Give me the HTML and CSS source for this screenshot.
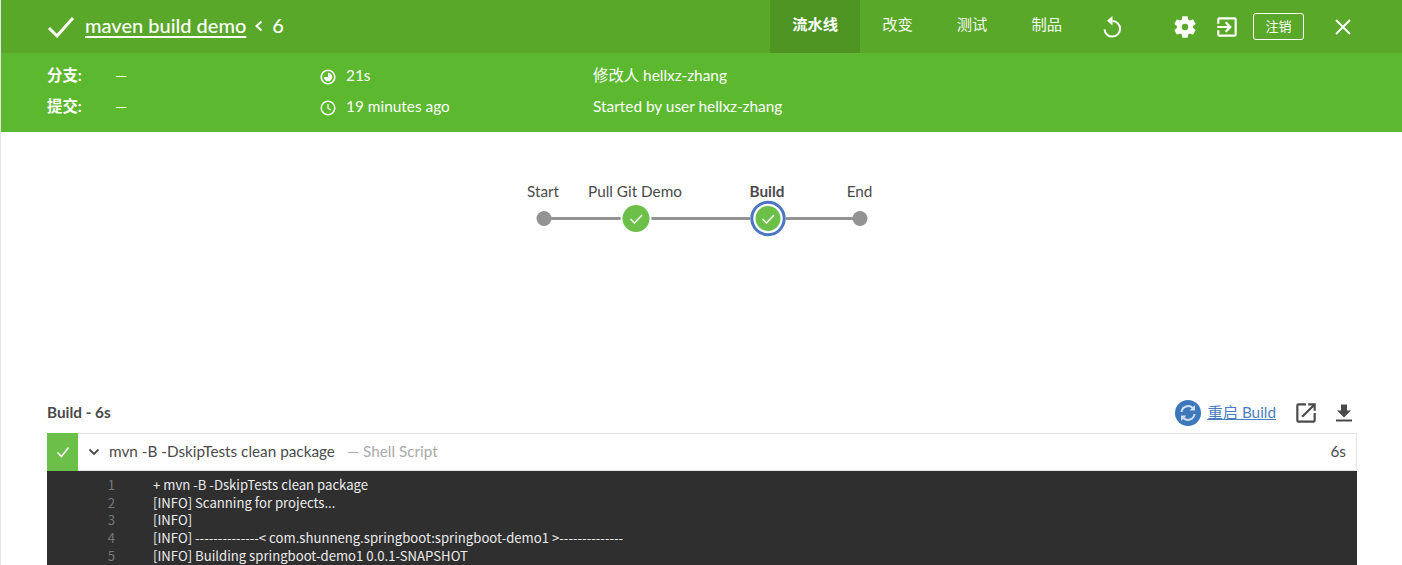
FILE: index.html
```html
<!DOCTYPE html>
<html lang="zh">
<head>
<meta charset="utf-8">
<title>maven build demo</title>
<link rel="stylesheet" href="styles.css">
</head>
<body>
<div class="page">
  <header class="topbar">
    <div class="title">
      <svg class="title-check" width="28" height="22" viewBox="0 0 28 22"><path d="M2 12l8 8L26 2" fill="none" stroke="#fff" stroke-width="3"/></svg>
      <a class="title-link" href="#">maven build demo</a>
      <svg class="title-chev" width="9" height="12" viewBox="0 0 9 12"><path d="M7.500 1.500L2.500 6l5 4.500" fill="none" stroke="#fff" stroke-width="2"/></svg>
      <span class="title-num">6</span>
    </div>
    <nav class="tabs">
      <a class="tab active">流水线</a>
      <a class="tab">改变</a>
      <a class="tab">测试</a>
      <a class="tab">制品</a>
    </nav>
    <svg class="icon-replay" width="24" height="24" viewBox="0 0 24 24"><path d="M12.500 6a7.800 7.800 0 1 1-8 8.400" fill="none" stroke="#fff" stroke-width="2"/><path d="M12.500 1v9.500L7 5.700z" fill="#fff"/></svg>
    <svg class="icon-gear" width="26" height="26" viewBox="0 0 24 24"><path fill="#fff" fill-rule="evenodd" d="M19.430 12.980c.04-.32.070-.64.070-.98s-.03-.66-.07-.98l2.110-1.650c.19-.15.240-.42.120-.64l-2-3.460c-.12-.22-.39-.3-.61-.22l-2.490 1c-.52-.4-1.080-.73-1.690-.98l-.38-2.650A.49.49 0 0 0 14 2h-4c-.25 0-.46.18-.49.42l-.38 2.650c-.61.25-1.170.59-1.690.98l-2.490-1c-.23-.09-.49 0-.61.220l-2 3.460c-.13.22-.07.49.12.64l2.110 1.650c-.04.32-.07.65-.07.98s.03.66.07.98l-2.110 1.650c-.19.15-.24.42-.12.64l2 3.460c.12.22.39.3.61.22l2.490-1c.52.4 1.080.73 1.690.98l.38 2.650c.03.24.24.42.49.42h4c.25 0 .46-.18.49-.42l.38-2.650c.61-.25 1.170-.59 1.690-.98l2.490 1c.23.09.49 0 .61-.22l2-3.460c.12-.22.07-.49-.12-.64l-2.110-1.650zM12 15a3 3 0 1 1 0-6 3 3 0 0 1 0 6z"/></svg>
    <svg class="icon-exit" width="26" height="26" viewBox="0 0 24 24"><path fill="#fff" d="M10.090 15.590L11.500 17l5-5-5-5-1.410 1.410L12.670 11H3v2h9.670l-2.580 2.590zM19 3H5a2 2 0 0 0-2 2v4h2V5h14v14H5v-4H3v4a2 2 0 0 0 2 2h14c1.100 0 2-.9 2-2V5c0-1.100-.9-2-2-2z"/></svg>
    <a class="logout">注销</a>
    <svg class="icon-close" width="24" height="24" viewBox="0 0 24 24"><path d="M5 5l14 14M19 5L5 19" fill="none" stroke="#fff" stroke-width="2"/></svg>
  </header>
  <section class="meta">
    <div class="meta-col meta-col-a">
      <div class="meta-row"><b class="meta-label">分支:</b><span>—</span></div>
      <div class="meta-row"><b class="meta-label">提交:</b><span>—</span></div>
    </div>
    <div class="meta-col meta-col-b">
      <div class="meta-row">
        <svg class="meta-icon" width="16" height="16" viewBox="0 0 16 16"><circle cx="8" cy="8" r="6.800" fill="none" stroke="#fff" stroke-width="1.600"/><path d="M8 3.800A4.200 4.200 0 1 1 3.800 8H8z" fill="#fff"/></svg>
        <span>21s</span>
      </div>
      <div class="meta-row">
        <svg class="meta-icon" width="16" height="16" viewBox="0 0 16 16"><circle cx="8" cy="8" r="6.800" fill="none" stroke="#fff" stroke-width="1.400"/><path d="M8 4v4.300l3 1.700" fill="none" stroke="#fff" stroke-width="1.200"/></svg>
        <span>19 minutes ago</span>
      </div>
    </div>
    <div class="meta-col">
      <div class="meta-row">修改人 hellxz-zhang</div>
      <div class="meta-row">Started by user hellxz-zhang</div>
    </div>
  </section>
  <section class="graph">
    <svg class="graph-svg" width="400" height="80" viewBox="0 0 400 80">
      <text class="node-label" x="41" y="20" text-anchor="middle">Start</text>
      <text class="node-label" x="133" y="20" text-anchor="middle">Pull Git Demo</text>
      <text class="node-label node-label-sel" x="265" y="20" text-anchor="middle">Build</text>
      <text class="node-label" x="357.500" y="20" text-anchor="middle">End</text>
      <path d="M42 41.500H358" stroke="#949393" stroke-width="3.200"/>
      <circle cx="42" cy="41.500" r="7.500" fill="#949393"/>
      <circle cx="134" cy="41.500" r="15.500" fill="#fff"/>
      <circle cx="134" cy="41.500" r="13.500" fill="#6cc04a"/>
      <path d="M128.500 42l4 4 7.500-8" fill="none" stroke="#fff" stroke-width="1.500"/>
      <circle cx="266" cy="41.500" r="18" fill="#fff"/>
      <circle cx="266" cy="41.500" r="16.200" fill="#fff" stroke="#4a75c2" stroke-width="3"/>
      <circle cx="266" cy="41.500" r="12.500" fill="#6cc04a"/>
      <path d="M260.500 42l4 4 7.500-8" fill="none" stroke="#fff" stroke-width="1.500"/>
      <circle cx="358" cy="41.500" r="7.500" fill="#949393"/>
    </svg>
  </section>
  <section class="detail">
    <div class="detail-head">
      <h2 class="detail-title">Build - 6s</h2>
      <svg class="restart-icon" width="26" height="26" viewBox="0 0 26 26"><circle cx="13" cy="13" r="13" fill="#3f77bb"/><path d="M6.500 12a6.700 6.700 0 0 1 11.500-3.800M19.500 14a6.700 6.700 0 0 1-11.500 3.800" fill="none" stroke="#cfe0f2" stroke-width="2"/><path d="M20 5v5.500h-5.500zM6 21v-5.500h5.500z" fill="#cfe0f2"/></svg>
      <a class="restart-link" href="#">重启 Build</a>
      <svg class="open-icon" width="26" height="26" viewBox="0 0 24 24"><path fill="#4a4a4a" d="M19 19H5V5h7V3H5a2 2 0 0 0-2 2v14a2 2 0 0 0 2 2h14c1.100 0 2-.9 2-2v-7h-2v7zM14 3v2h3.590l-9.830 9.830 1.410 1.410L19 6.410V10h2V3h-7z"/></svg>
      <svg class="download-icon" width="24" height="24" viewBox="0 0 24 24"><path fill="#4a4a4a" d="M19 9.500h-4v-6H9v6H5l7 7 7-7zM4 18.500v2h16v-2H4z"/></svg>
    </div>
    <div class="step">
      <div class="step-status"><svg width="14" height="12" viewBox="0 0 14 12"><path d="M1.500 6.500l4 4 7-9" fill="none" stroke="#fff" stroke-width="1.500"/></svg></div>
      <svg class="step-chev" width="12" height="8" viewBox="0 0 12 8"><path d="M1.500 1.500L6 6l4.500-4.500" fill="none" stroke="#4a4a4a" stroke-width="1.800"/></svg>
      <span class="step-name">mvn -B -DskipTests clean package</span>
      <span class="step-kind">— Shell Script</span>
      <span class="step-time">6s</span>
    </div>
    <div class="log">
      <div class="log-line"><span class="log-num">1</span><span>+ mvn -B -DskipTests clean package</span></div>
      <div class="log-line"><span class="log-num">2</span><span>[INFO] Scanning for projects...</span></div>
      <div class="log-line"><span class="log-num">3</span><span>[INFO]</span></div>
      <div class="log-line"><span class="log-num">4</span><span>[INFO] --------------&lt; com.shunneng.springboot:springboot-demo1 &gt;--------------</span></div>
      <div class="log-line"><span class="log-num">5</span><span>[INFO] Building springboot-demo1 0.0.1-SNAPSHOT</span></div>
    </div>
  </section>
</div>
</body>
</html>
```
FILE: styles.css
```css
html, body {
  margin: 0;
  height: 565px;
  overflow: hidden;
  background: #fff;
}
body {
  font-family: Lato, "Noto Sans CJK SC", sans-serif;
  color: #4a4a4a;
}
.page {
  border-left: 1px solid #e4e4e4;
  height: 565px;
  overflow: hidden;
}
.topbar {
  height: 53px;
  background: #5aa829;
  display: flex;
  align-items: center;
  color: #fff;
}
.title {
  display: flex;
  align-items: center;
  flex: 1;
  padding-left: 46px;
  font-size: 20px;
  font-weight: 500;
}
.title-check { margin-right: 10px; }
.title-link {
  color: #fff;
  text-decoration: underline;
  text-underline-offset: 3px;
  margin-bottom: 3px;
}
.title-chev { margin: 0 9px 2px 8px; }
.title-num { margin-bottom: 3px; }
.tabs { display: flex; height: 53px; }
.tab {
  padding: 0 22px;
  font-size: 15.300px;
  line-height: 49px;
  color: #fff;
  opacity: 0.95;
}
.tab.active {
  background: #4e9423;
  font-weight: 700;
  opacity: 1;
}
.icon-replay { margin-left: 16px; margin-right: 48px; margin-top: 1px; }
.icon-gear { margin-right: 16px; }
.icon-exit { margin-right: 13px; }
.logout {
  width: 49px;
  height: 25px;
  border: 1px solid #fff;
  border-radius: 3px;
  font-size: 13px;
  line-height: 24px;
  text-align: center;
  margin-right: 27px;
}
.icon-close { margin-right: 47px; }
.meta {
  height: 79px;
  background: #5cb82f;
  display: flex;
  color: #fff;
  font-size: 15.400px;
  padding: 7px 0 0 46px;
  box-sizing: border-box;
}
.meta-col-a { width: 273px; }
.meta-col-b { width: 273px; }
.meta-row {
  height: 31px;
  line-height: 31px;
  display: flex;
  align-items: center;
}
.meta-label { width: 68px; font-weight: 700; }
.meta-icon { margin-right: 10px; margin-top: 2px; flex: none; }
.graph {
  height: 269px;
  padding-top: 45px;
  box-sizing: border-box;
  display: flex;
  justify-content: center;
}
.graph-svg { display: block; }
.node-label { font-family: Lato, sans-serif; font-size: 15.300px; fill: #4a4a4a; }
.node-label-sel { font-weight: 700; }
.detail { padding: 0 45px 0 46px; }
.detail-head {
  height: 33px;
  padding-bottom: 10px;
  box-sizing: border-box;
  display: flex;
  align-items: center;
}
.detail-title {
  flex: 1;
  margin: -2px 0 0;
  font-size: 15.300px;
  font-weight: 700;
  color: #4a4a4a;
}
.restart-icon { margin-right: 6px; }
.restart-link {
  color: #4a7dbf;
  font-size: 15.300px;
  text-decoration: underline;
  margin: -3px 17px 0 0;
}
.open-icon { margin-right: 13px; }
.download-icon { margin-right: 1px; }
.step {
  height: 36px;
  margin-top: -1px;
  border: 1px solid #e4e4e4;
  border-left: 0;
  display: flex;
  align-items: center;
  font-size: 15.300px;
  padding-bottom: 0;
  line-height: 32px;
}
.step-status {
  width: 31px;
  height: 38px;
  margin: -1px 0;
  background: #6cc04a;
  display: flex;
  align-items: center;
  justify-content: center;
}
.step-chev { margin: 0 9px 0 10px; }
.step-name { margin-bottom: 2px; }
.step-kind { color: #aaa; margin: 0 0 2px 12px; flex: 1; }
.step-time { margin: 0 10px 2px 0; }
.log {
  background: #2f2f2f;
  color: #ececec;
  font-family: "Noto Sans CJK SC", sans-serif;
  font-size: 13.150px;
  line-height: 17.700px;
  padding-top: 5px;
  height: 100px;
}
.log-line { display: flex; white-space: pre; }
.log-num {
  width: 68px;
  margin-right: 38px;
  text-align: right;
  color: #777;
}
```
